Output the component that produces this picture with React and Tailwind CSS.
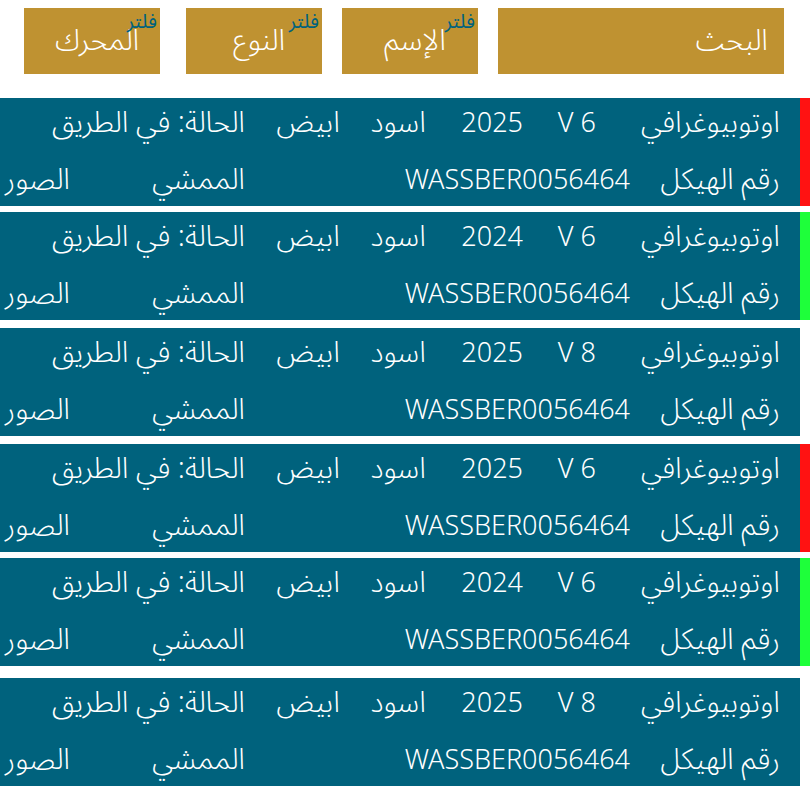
const filters = [
  { label: "الإسم", gap: "mr-[20px]" },
  { label: "النوع", gap: "mr-[20px]" },
  { label: "المحرك", gap: "mr-[26px]" },
];

const cars = [
  { engine: "V 6", year: "2025", status: "red", mt: "mt-0" },
  { engine: "V 6", year: "2024", status: "green", mt: "mt-[6px]" },
  { engine: "V 8", year: "2025", status: "none", mt: "mt-[8px]" },
  { engine: "V 6", year: "2025", status: "red", mt: "mt-[8px]" },
  { engine: "V 6", year: "2024", status: "green", mt: "mt-[6px]" },
  { engine: "V 8", year: "2025", status: "none", mt: "mt-[12px]" },
];

function CarRow({ car }) {
  const bar =
    car.status === "red"
      ? "bg-[#ff1212]"
      : car.status === "green"
      ? "bg-[#1eff3a]"
      : "bg-white";
  return (
    <div className={"flex h-[108px] " + car.mt}>
      <div className={"w-[10px] shrink-0 " + bar}></div>
      <div className="flex-1 bg-[#00627d] pr-[20px] text-white text-[29px] leading-[40px] font-light flex flex-col">
        <div className="flex h-[49px] pt-[5px] items-baseline">
          <div className="w-[184px] shrink-0">اوتوبيوغرافي</div>
          <div className="w-[73px] shrink-0 text-[27px] text-right" dir="ltr">
            {car.engine}
          </div>
          <div className="w-[97px] shrink-0 text-[27px]">{car.year}</div>
          <div className="w-[86px] shrink-0">اسود</div>
          <div className="w-[95px] shrink-0">ابيض</div>
          <div className="flex-1 whitespace-nowrap">الحالة: في الطريق</div>
        </div>
        <div className="flex h-[59px] pt-[13px] items-baseline">
          <div className="w-[150px] shrink-0">رقم الهيكل</div>
          <div className="w-[385px] shrink-0 text-[27px]">WASSBER0056464</div>
          <div className="w-[175px] shrink-0">الممشي</div>
          <div className="flex-1 whitespace-nowrap">الصور</div>
        </div>
      </div>
    </div>
  );
}

export default function App() {
  return (
    <div
      dir="rtl"
      className="w-[810px] h-[788px] overflow-hidden bg-white font-['Noto_Sans_Arabic','Noto_Sans',sans-serif]"
    >
      <div className="flex h-[98px] pt-[8px] pr-[26px]">
        <div className="w-[286px] h-[66px] bg-[#bf9231] text-white text-[29px] font-light flex items-center pr-[16px]">
          البحث
        </div>
        {filters.map((f) => (
          <div
            key={f.label}
            className={"relative h-[66px] w-[136px] bg-[#bf9231] flex justify-center pl-[10px] pt-[18px] " + f.gap}
          >
            <span className="absolute top-[4px] right-[3px] text-[20px] leading-none text-[#00627d]">
              فلتر
            </span>
            <span className="text-white text-[29px] font-light leading-none">
              {f.label}
            </span>
          </div>
        ))}
      </div>
      {cars.map((car, i) => (
        <CarRow key={i} car={car} />
      ))}
    </div>
  );
}
